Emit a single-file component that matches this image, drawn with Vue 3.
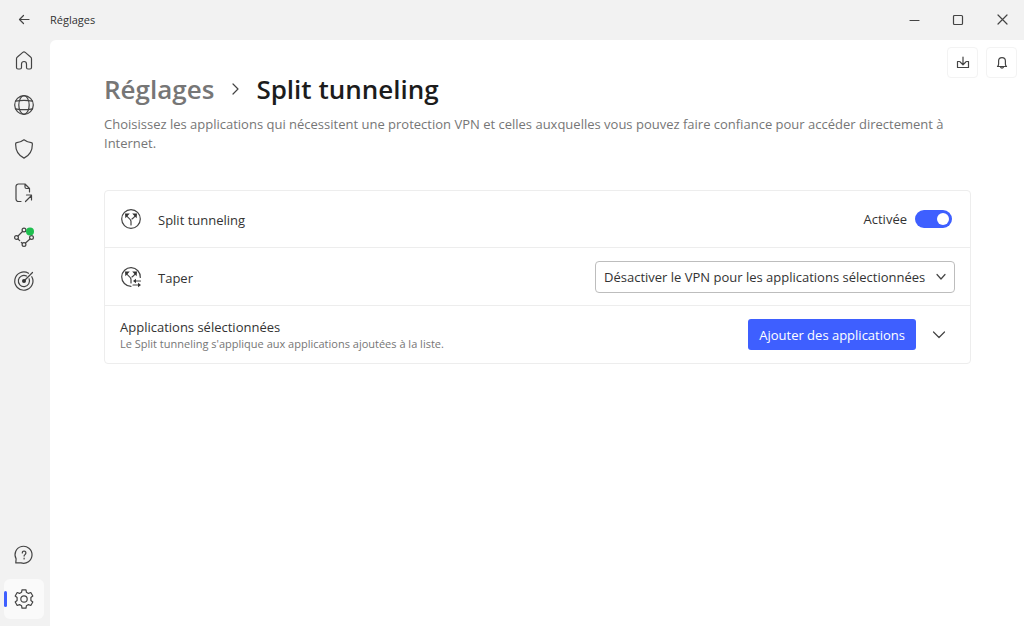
<script setup>
import { ref } from 'vue'

const enabled = ref(true)
const mode = ref('exclude')
const nav = [
  { id: 'home', label: 'Accueil' },
  { id: 'globe', label: 'VPN' },
  { id: 'shield', label: 'Protection' },
  { id: 'file', label: 'Partage de fichiers' },
  { id: 'mesh', label: 'Meshnet' },
  { id: 'target', label: 'Surveillance' }
]
</script>

<template>
  <div class="window">
    <header class="titlebar">
      <button class="back" aria-label="Retour">
        <svg width="12" height="12" viewBox="0 0 12 12"><path d="M11 5.500H1.500M5.500 1.500l-4 4 4 4" /></svg>
      </button>
      <span class="app-title">Réglages</span>
      <div class="controls">
        <button aria-label="Réduire"><svg width="12" height="12" viewBox="0 0 12 12"><path d="M2 6.500H11" /></svg></button>
        <button aria-label="Agrandir"><svg width="12" height="12" viewBox="0 0 12 12"><rect x="1.500" y="1.500" width="9" height="9" rx="1" /></svg></button>
        <button aria-label="Fermer"><svg width="12" height="12" viewBox="0 0 12 12"><path d="M2 1l9 9M11 1 2 10" /></svg></button>
      </div>
    </header>

    <div class="body">
      <nav class="sidebar">
        <button v-for="item in nav" :key="item.id" class="nav-item" :aria-label="item.label">
          <svg width="22" height="22" viewBox="0 0 22 22">
            <g v-if="item.id === 'home'">
              <path d="M3.500 8.800C3.500 8 3.800 7.400 4.400 7L9.800 2.400a1.900 1.900 0 0 1 2.400 0L17.600 7c.6.4.9 1 .9 1.800v8.700a1.500 1.500 0 0 1-1.500 1.500h-2a1.500 1.500 0 0 1-1.500-1.500V14a2.500 2.500 0 0 0-5 0v3.500A1.500 1.500 0 0 1 7 19H5a1.500 1.500 0 0 1-1.500-1.500z" />
            </g>
            <g v-else-if="item.id === 'globe'">
              <circle cx="11" cy="11" r="9.300" />
              <ellipse cx="11" cy="11" rx="5.200" ry="9.300" />
              <path d="M2.600 7.200Q11 5.400 19.400 7.200M2.600 14.800Q11 16.600 19.400 14.800" />
            </g>
            <path v-else-if="item.id === 'shield'" d="M11 1.800c2.300 1.700 4.700 2.700 7.200 2.900.9.100 1.200.6 1.200 1.400 0 6.600-2.400 11.300-8.400 14-6-2.700-8.400-7.400-8.400-14 0-.8.300-1.300 1.200-1.400C6.300 4.500 8.700 3.500 11 1.800z" />
            <g v-else-if="item.id === 'file'">
              <path d="M8 19.500H5.500A2.500 2.500 0 0 1 3 17V4.500A2.500 2.500 0 0 1 5.500 2H12l4.500 4.500V10M12 2v3a1.500 1.500 0 0 0 1.500 1.500h3M12.500 19.500l6-6M13.500 13h5v5" />
            </g>
            <g v-else-if="item.id === 'mesh'">
              <circle cx="11" cy="4" r="1.900" /><circle cx="3.500" cy="11.500" r="1.900" />
              <circle cx="11" cy="18.500" r="1.900" /><circle cx="18.500" cy="11.500" r="1.900" />
              <path d="M9.500 5.500 5 10M5 13l1.700 1.700M8.300 16.300 9.500 17.500M12.500 17l4.500-4" />
              <circle class="status" cx="17" cy="5.500" r="4" />
            </g>
            <g v-else>
              <path d="M15.500 3.300A9.100 9.100 0 1 0 18.800 6.700M13.500 6A5.600 5.600 0 1 0 16.100 8.800M11 11l8.500-8.500" />
              <circle class="dot" cx="11" cy="11" r="2" />
            </g>
          </svg>
        </button>
        <span class="spacer"></span>
        <button class="nav-item" aria-label="Aide">
          <svg width="22" height="22" viewBox="0 0 22 22">
            <path d="M2.800 18.900l.3-4A8.500 8.500 0 1 1 8 18.900zM9.300 8.900a1.800 1.800 0 1 1 2.800 1.500c-.7.400-1 .8-1 1.700M11.100 14v1" />
          </svg>
        </button>
        <button class="nav-item active" aria-label="Réglages" aria-current="page">
          <svg width="22" height="22" viewBox="0 0 22 22">
            <path d="M8.600 4.200 9 1.800h4l.4 2.400 2.100 1.200 2.300-.9 2 3.500-1.900 1.500v3l1.900 1.500-2 3.500-2.300-.9-2.100 1.200-.4 2.400H9l-.4-2.400-2.100-1.200-2.300.9-2-3.500 1.900-1.500v-3L2.200 8l2-3.500 2.300.9z" />
            <circle cx="11" cy="11" r="3.200" />
          </svg>
        </button>
      </nav>

      <main class="page">
        <div class="tools">
          <button aria-label="Téléchargements">
            <svg width="14" height="14" viewBox="0 0 14 14"><path d="M3.500 5.500h-2v6h11v-6h-2M7 1v7.500M4.200 6 7 8.800 9.800 6" /></svg>
          </button>
          <button aria-label="Notifications">
            <svg width="14" height="14" viewBox="0 0 14 14"><path d="M2.500 10.500c.8-.7 1.100-1.300 1.100-2.500V5a3.400 3.400 0 0 1 6.800 0v3c0 1.200.3 1.800 1.100 2.500zM5.500 11a1.600 1.600 0 0 0 3 0" /></svg>
          </button>
        </div>

        <div class="content">
          <h1>
            <a href="#">Réglages</a>
            <svg width="10" height="14" viewBox="0 0 10 14"><path d="M3 2l5 5-5 5" /></svg>
            <span>Split tunneling</span>
          </h1>
          <p class="intro">Choisissez les applications qui nécessitent une protection VPN et celles auxquelles vous pouvez faire confiance pour accéder directement à Internet.</p>

          <section class="card">
            <div class="row">
              <svg class="row-icon" width="22" height="22" viewBox="0 0 22 22">
                <circle cx="11" cy="11" r="9.300" />
                <path d="M11 17v-3.500c0-2.500-2.800-3.300-4.500-6M12 11c1.500-1 2.500-2 3.500-3.500" />
                <path class="arrow" d="M5 5.500h4.800L5.400 10.300zM17 5.500h-4.800l4.400 4.800z" />
              </svg>
              <label class="label" for="split">Split tunneling</label>
              <label class="state" for="split">{{ enabled ? 'Activée' : 'Désactivée' }}</label>
              <input id="split" v-model="enabled" class="switch" type="checkbox" role="switch" />
            </div>
            <div class="row">
              <svg class="row-icon" width="22" height="22" viewBox="0 0 22 22">
                <path d="M11 20.300A9.300 9.300 0 1 1 20.300 11.500" />
                <path d="M11 17v-3.500c0-2.500-2.800-3.300-4.500-6M12 11c1.500-1 2.500-2 3.500-3.500M15 15h5.500M13 19h6" />
                <path class="arrow" d="M5 5.500h4.800L5.400 10.300zM17 5.500h-4.800l4.400 4.800zM16 12.800v4.400L13 15zM18 16.800v4.400l3-2.200z" />
              </svg>
              <label class="label" for="mode">Taper</label>
              <div class="select">
                <select id="mode" v-model="mode">
                  <option value="exclude">Désactiver le VPN pour les applications sélectionnées</option>
                </select>
                <svg width="12" height="8" viewBox="0 0 12 8"><path d="m2 1.500 4 4.500 4-4.500" /></svg>
              </div>
            </div>
            <div class="row">
              <div class="apps">
                <h2>Applications sélectionnées</h2>
                <p>Le Split tunneling s'applique aux applications ajoutées à la liste.</p>
              </div>
              <button class="primary">Ajouter des applications</button>
              <button class="expand" aria-label="Développer">
                <svg width="14" height="8" viewBox="0 0 14 8"><path d="m1.500 1 5.500 5.500L12.500 1" /></svg>
              </button>
            </div>
          </section>
        </div>
      </main>
    </div>
  </div>
</template>

<style>
body { margin: 0; }
</style>

<style scoped>
.window {
  min-height: 100vh;
  display: flex;
  flex-direction: column;
  background: #f2f2f2;
  color: #333;
  font-family: "Open Sans", "Noto Sans", sans-serif;
  font-size: 13px;
  line-height: 20px;
}
* { box-sizing: border-box; }
button {
  display: flex;
  align-items: center;
  justify-content: center;
  padding: 0;
  border: 0;
  background: none;
  color: inherit;
  font: inherit;
}
svg { display: block; fill: none; stroke: #444; stroke-width: 1.2; stroke-linecap: round; stroke-linejoin: round; flex: none; }
.titlebar { display: flex; align-items: center; height: 40px; }
.back { width: 48px; height: 36px; }
.app-title { padding-left: 2px; font-size: 11px; }
.controls { display: flex; margin-left: auto; }
.controls button { width: 44px; height: 36px; }
.body { flex: 1; display: flex; }
.sidebar { width: 50px; flex: none; display: flex; flex-direction: column; gap: 4px; padding: 1px 6px 7px 4px; }
.nav-item { height: 40px; flex: none; border-radius: 6px; }
.nav-item.active { position: relative; background: #fafafa; }
.nav-item.active::before {
  content: "";
  position: absolute;
  left: 0;
  top: 12px;
  width: 3px;
  height: 16px;
  border-radius: 2px;
  background: #3e5fff;
}
.spacer { flex: 1; }
.status { fill: #1fbf4f; stroke: none; }
.dot, .arrow { fill: #333; stroke: none; }
.page { flex: 1; min-width: 0; position: relative; background: #fff; border-top-left-radius: 6px; }
.tools { position: absolute; top: 7px; right: 7px; display: flex; gap: 8px; }
.tools button { width: 31px; height: 31px; border: 1px solid #f3f3f3; border-radius: 4px; }
.content { padding: 31px 53px 0 54px; }
h1 { margin: 0; display: flex; align-items: center; font-size: 26px; line-height: 36px; font-weight: 600; color: #1c1c1c; }
h1 a { color: #767676; text-decoration: none; }
h1 svg { margin: 0 16px; }
.intro { margin: 8px 0 0; line-height: 19px; color: #767676; }
.card { margin-top: 37px; border: 1px solid #ededed; border-radius: 4px; }
.row { display: flex; align-items: center; min-height: 56px; padding: 0 15px; }
.row + .row { min-height: 58px; border-top: 1px solid #ededed; }
.label { margin: 2px auto 0 16px; }
.state { margin-right: 8px; }
.switch {
  appearance: none;
  display: flex;
  align-items: center;
  justify-content: flex-end;
  width: 37px;
  height: 18px;
  margin: 0 3px 0 0;
  padding: 0 3px;
  border-radius: 9px;
  background: #3e5fff;
}
.switch:not(:checked) { justify-content: flex-start; background: #999; }
.switch::before { content: ""; width: 12px; height: 12px; border-radius: 50%; background: #fff; }
.select { display: grid; align-items: center; width: 360px; }
.select select, .select svg { grid-area: 1 / 1; }
.select select {
  appearance: none;
  width: 100%;
  height: 32px;
  padding: 0 28px 0 8px;
  border: 1px solid #bdbdbd;
  border-radius: 4px;
  background: #fff;
  color: inherit;
  font: inherit;
}
.select svg { justify-self: end; margin-right: 8px; pointer-events: none; }
.apps { margin-right: auto; }
h2 { margin: 0; font-size: 13px; line-height: 18px; font-weight: 400; }
.apps p { margin: 0; font-size: 11px; line-height: 16px; color: #767676; }
.primary { height: 31px; padding: 0 11px; border-radius: 3px; background: #3e5fff; color: #fff; }
.expand { width: 32px; height: 31px; margin-left: 7px; }
</style>
